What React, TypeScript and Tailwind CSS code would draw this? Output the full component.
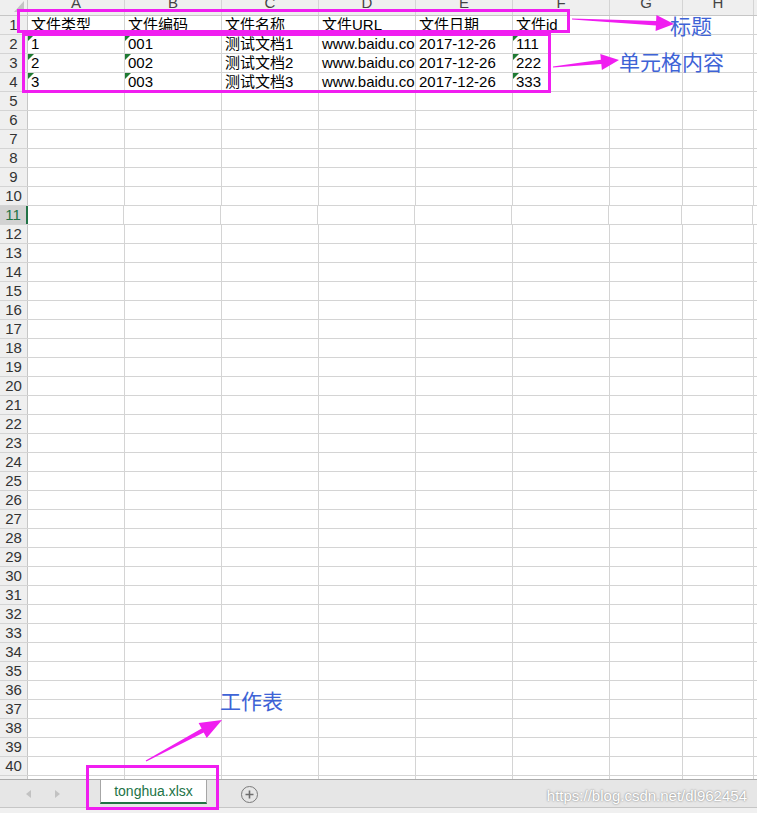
import React from "react";

const FONT = "'Liberation Sans','Noto Sans CJK SC',sans-serif";
const CJK = "'Noto Sans CJK SC','Liberation Sans',sans-serif";

const colW = [97, 97, 97, 97, 97, 97, 73, 71, 30];
const letters = ["A", "B", "C", "D", "E", "F", "G", "H", "I"];

const data: string[][] = [
  ["文件类型", "文件编码", "文件名称", "文件URL", "文件日期", "文件id"],
  ["1", "001", "测试文档1", "www.baidu.com", "2017-12-26", "111"],
  ["2", "002", "测试文档2", "www.baidu.com", "2017-12-26", "222"],
  ["3", "003", "测试文档3", "www.baidu.com", "2017-12-26", "333"],
];

function arrowPoints(
  x1: number,
  y1: number,
  x2: number,
  y2: number,
  headLen: number,
  headW: number,
  shaftW: number
) {
  const dx = x2 - x1;
  const dy = y2 - y1;
  const len = Math.hypot(dx, dy);
  const ux = dx / len;
  const uy = dy / len;
  const nx = -uy;
  const ny = ux;
  const bx = x2 - ux * headLen;
  const by = y2 - uy * headLen;
  const p = (x: number, y: number) => `${x.toFixed(1)},${y.toFixed(1)}`;
  return [
    p(x1 + nx * 0.6, y1 + ny * 0.6),
    p(bx + nx * shaftW / 2, by + ny * shaftW / 2),
    p(bx + nx * headW / 2, by + ny * headW / 2),
    p(x2, y2),
    p(bx - nx * headW / 2, by - ny * headW / 2),
    p(bx - nx * shaftW / 2, by - ny * shaftW / 2),
    p(x1 - nx * 0.6, y1 - ny * 0.6),
  ].join(" ");
}

function Cell({
  w,
  text,
  tri,
}: {
  w: number;
  text?: string;
  tri?: boolean;
}) {
  return (
    <div
      className="relative h-full shrink-0 overflow-hidden whitespace-nowrap border-r border-[#d4d4d4] pl-[3px] text-[15px] leading-[17px] text-black"
      style={{ width: w }}
    >
      {tri && (
        <div className="absolute left-0 top-0 h-0 w-0 border-r-[6px] border-t-[6px] border-r-transparent border-t-[#1f7a33]" />
      )}
      {text}
    </div>
  );
}

export default function App() {
  const rows = Array.from({ length: 41 }, (_, i) => i + 1);
  const magenta = "#f01ef0";
  return (
    <div
      className="relative flex h-[813px] w-[757px] flex-col overflow-hidden bg-white"
      style={{ fontFamily: FONT }}
    >
      {/* column header */}
      <div className="flex h-[16px] shrink-0 border-b border-[#c6c6c6] bg-[#efefef]">
        <div className="relative h-full w-[28px] shrink-0 overflow-hidden border-r border-[#c6c6c6]">
          <div className="absolute bottom-[3px] right-[3px] h-0 w-0 border-b-[11px] border-l-[10px] border-b-[#c3c3c3] border-l-transparent" />
        </div>
        {colW.map((w, i) => (
          <div
            key={i}
            className="h-full shrink-0 overflow-hidden border-r border-[#d4d4d4] text-center text-[15px] leading-[17px] text-[#444]"
            style={{ width: w }}
          >
            <div className="-mt-[6px]">{letters[i]}</div>
          </div>
        ))}
      </div>

      {/* rows */}
      <div className="flex flex-col">
        {rows.map((r) => {
          const sel = r === 11;
          const rowData = data[r - 1];
          return (
            <div
              key={r}
              className="flex h-[19px] shrink-0 border-b border-[#d4d4d4]"
            >
              <div
                className={
                  sel
                    ? "h-full w-[28px] shrink-0 border-r-2 border-[#217346] bg-[#d2d2d2] text-center text-[15px] leading-[18px] text-[#217346]"
                    : "h-full w-[28px] shrink-0 border-r border-[#c6c6c6] bg-[#efefef] text-center text-[15px] leading-[18px] text-[#333]"
                }
              >
                {r}
              </div>
              {colW.map((w, i) => (
                <Cell
                  key={i}
                  w={i === 0 && sel ? w - 1 : w}
                  text={rowData ? rowData[i] : undefined}
                  tri={!!rowData && r > 1 && (i === 0 || i === 1 || i === 5)}
                />
              ))}
            </div>
          );
        })}
      </div>

      {/* sheet tab bar */}
      <div className="absolute bottom-0 left-0 right-0 flex h-[34px] flex-col">
        <div className="flex h-[28px] shrink-0 items-start border-t border-[#ababab] bg-[#e6e6e6]">
          <div className="flex h-[27px] w-[100px] shrink-0 items-center">
            <div className="ml-[26px] h-0 w-0 border-y-[4px] border-r-[5px] border-y-transparent border-r-[#c2c2c2]" />
            <div className="ml-[24px] h-0 w-0 border-y-[4px] border-l-[5px] border-y-transparent border-l-[#c2c2c2]" />
          </div>
          <div className="flex h-[24px] w-[107px] shrink-0 items-center justify-center border-x border-b-2 border-x-[#a6a6a6] border-b-[#217346] bg-white text-[14px] text-[#217346]">
            tonghua.xlsx
          </div>
          <div className="ml-[34px] mt-[6px] flex h-[17px] w-[17px] items-center justify-center rounded-full border-[1.5px] border-[#7a7a7a]">
            <svg width="9" height="9" viewBox="0 0 9 9">
              <path d="M4.5 0.5V8.5M0.5 4.5H8.5" stroke="#6e6e6e" strokeWidth="1.6" />
            </svg>
          </div>
          <div className="ml-auto mr-[10px] mt-[5px] text-[15px] text-white [text-shadow:0_0_2px_#6a6a6a]">
            https://blog.csdn.net/dl962454
          </div>
        </div>
        <div className="h-[6px] shrink-0 border-t border-[#c6c6c6] bg-[#f0f0f0]" />
      </div>

      {/* annotations */}
      <svg
        className="pointer-events-none absolute left-0 top-0"
        width="757"
        height="813"
      >
        <rect x="18.5" y="10.5" width="550" height="21" fill="none" stroke={magenta} strokeWidth="3" />
        <rect x="23.5" y="34.5" width="526" height="57" fill="none" stroke={magenta} strokeWidth="3" />
        <rect x="87.5" y="766.5" width="130" height="42" fill="none" stroke={magenta} strokeWidth="3" />
        <polygon points={arrowPoints(572, 19, 674, 24, 18, 16, 4.5)} fill={magenta} />
        <polygon points={arrowPoints(553, 67, 619, 60, 18, 16, 4.5)} fill={magenta} />
        <polygon points={arrowPoints(146, 761, 222, 720, 22, 17, 4.5)} fill={magenta} />
      </svg>
      <div
        className="absolute left-[670px] top-[12px] text-[21px] leading-[26px] text-[#3e63d6]"
        style={{ fontFamily: CJK }}
      >
        标题
      </div>
      <div
        className="absolute left-[619px] top-[48px] text-[21px] leading-[26px] text-[#3e63d6]"
        style={{ fontFamily: CJK }}
      >
        单元格内容
      </div>
      <div
        className="absolute left-[220px] top-[687px] text-[21px] leading-[26px] text-[#3e63d6]"
        style={{ fontFamily: CJK }}
      >
        工作表
      </div>
    </div>
  );
}
